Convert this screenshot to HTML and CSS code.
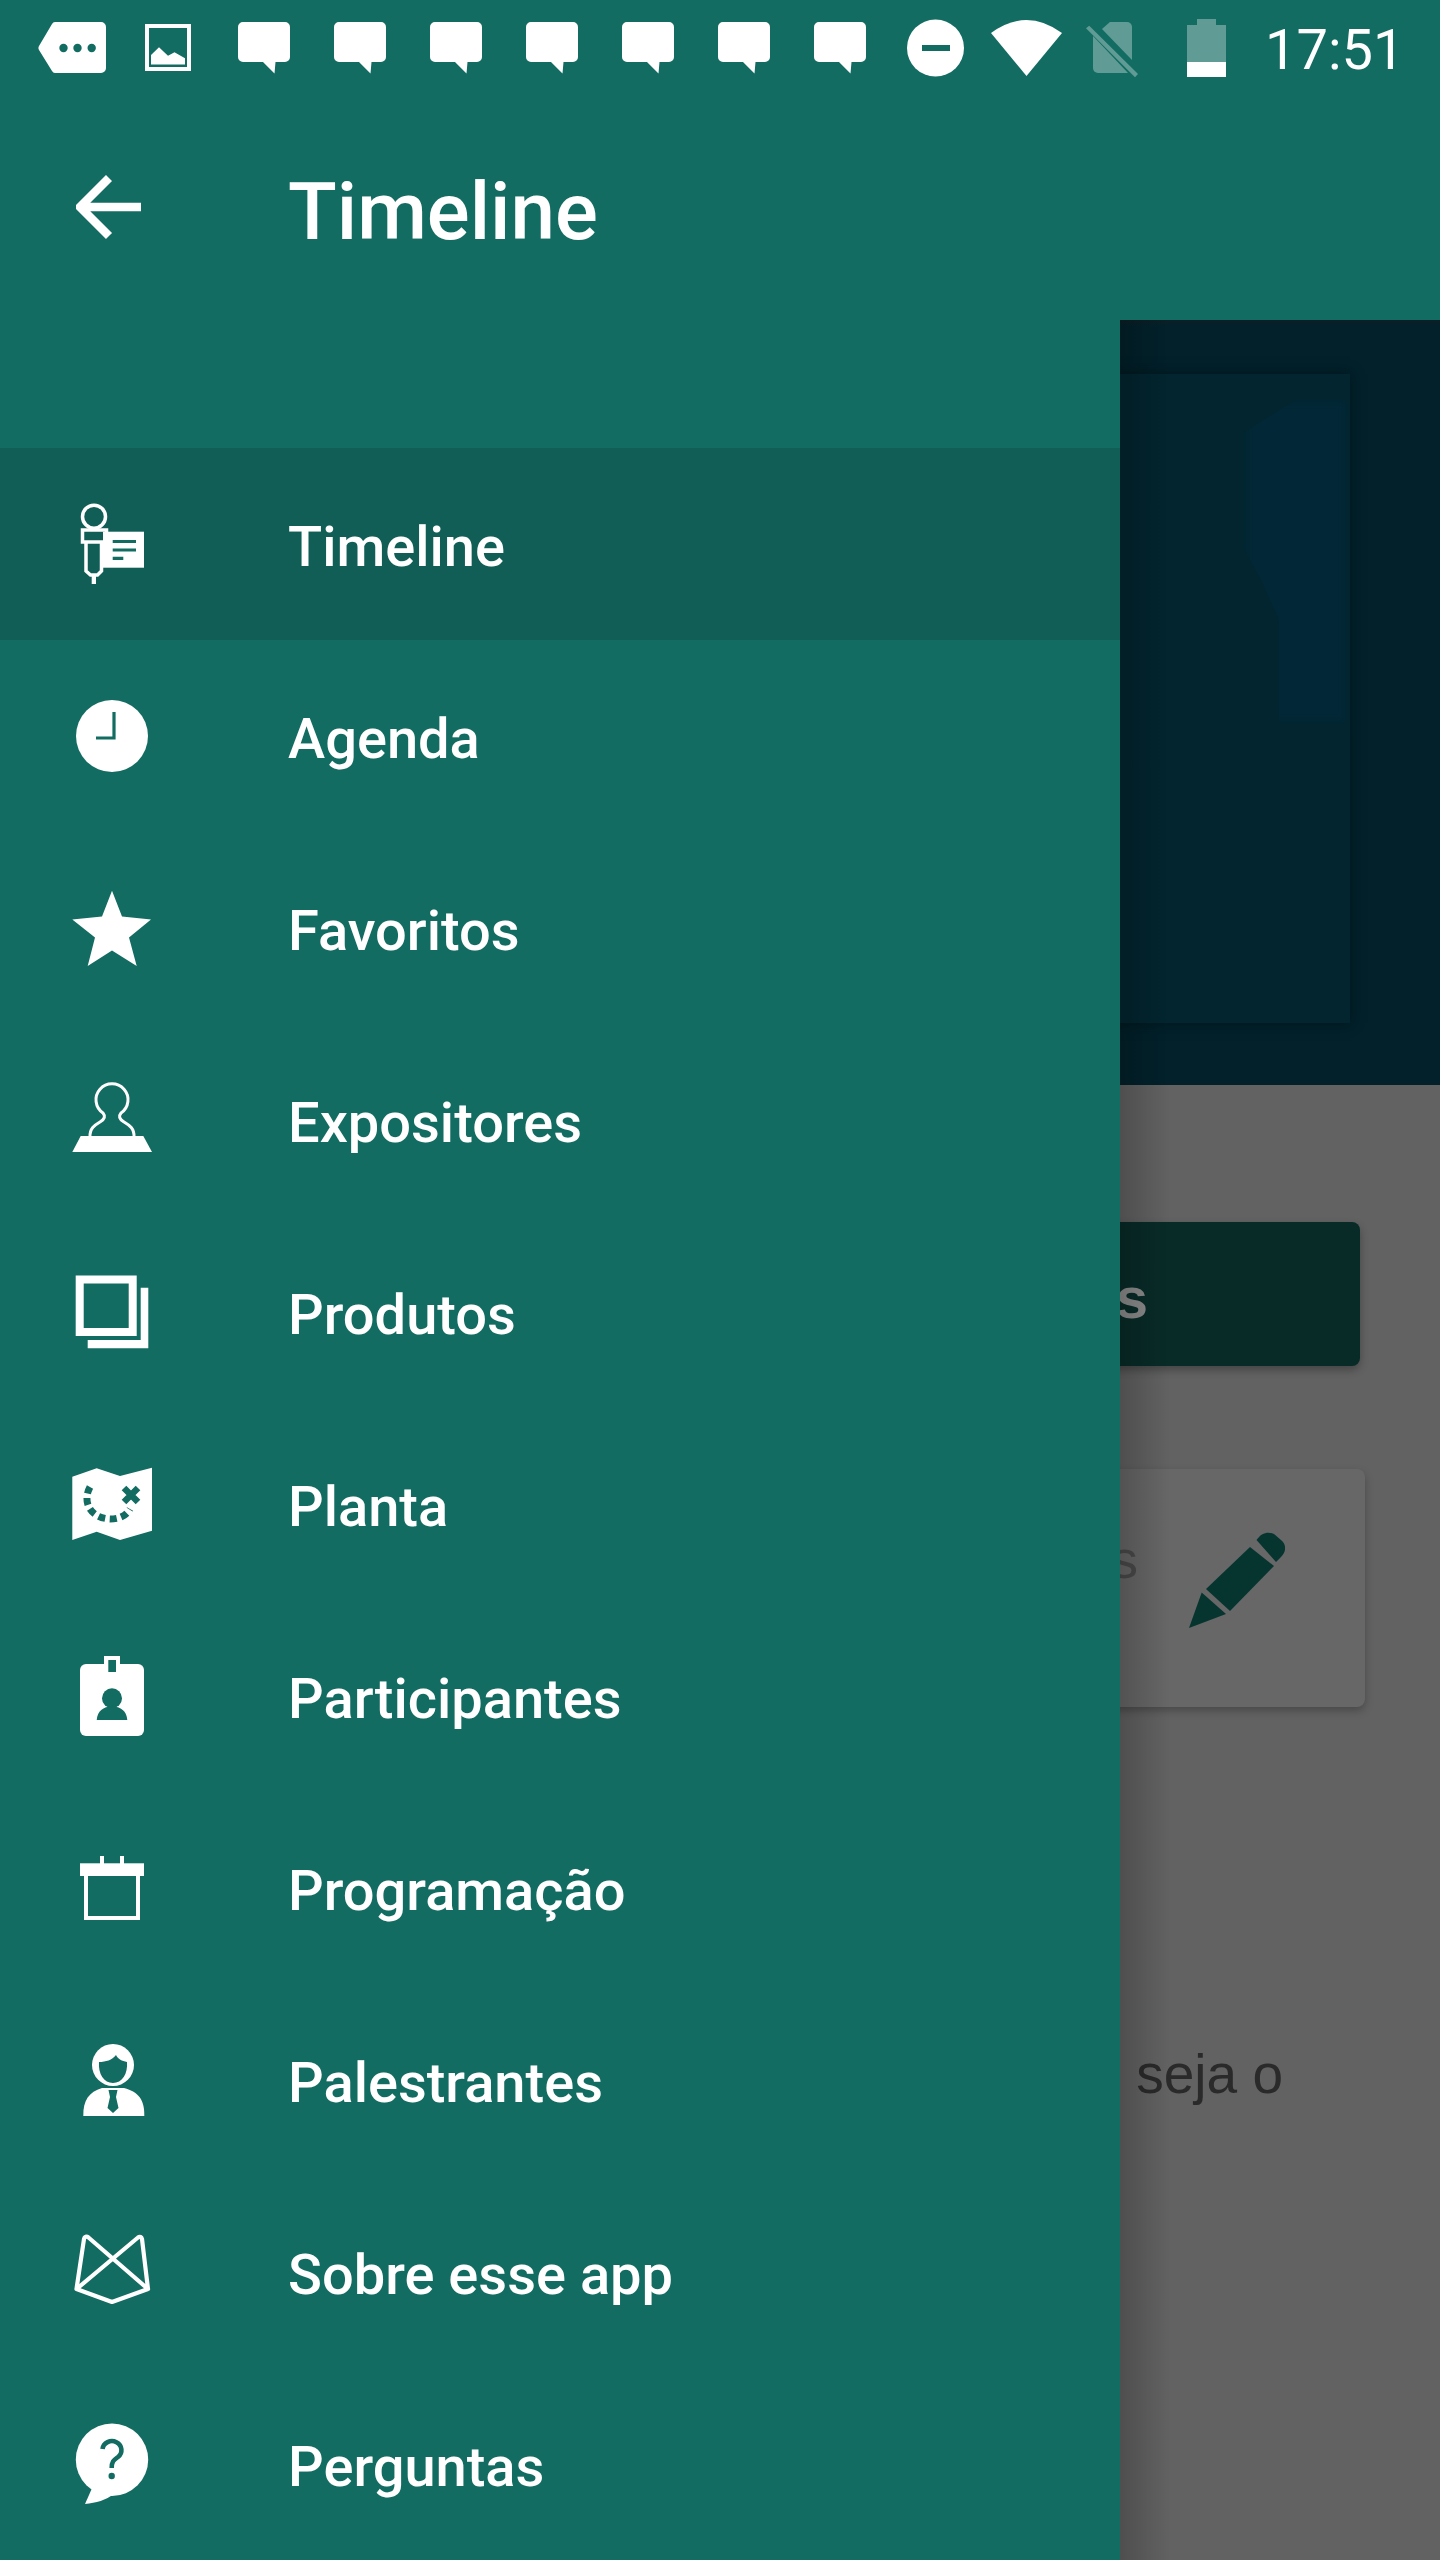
FILE: index.html
```html
<!DOCTYPE html>
<html lang="pt-BR">
<head>
<meta charset="utf-8">
<title>Timeline</title>
<link rel="stylesheet" href="styles.css">
</head>
<body>
<div class="phone">
  <header class="appbar">
    <div class="status">
      <svg class="st st-mail" viewBox="0 0 68 96"><path class="w" d="M17 22H63a5 5 0 0 1 5 5V68a5 5 0 0 1-5 5H17a4 4 0 0 1-3-2L1 50a4 4 0 0 1 0-4L14 24a4 4 0 0 1 3-2Z"/><circle class="t" cx="25.5" cy="48" r="4.2"/><circle class="t" cx="39.5" cy="48" r="4.2"/><circle class="t" cx="53.7" cy="48" r="4.2"/></svg>
      <svg class="st st-img" viewBox="0 0 46 96"><rect class="ow" x="2" y="26" width="42" height="43" stroke-width="4"/><path class="w" d="M6 55L14 47.3L23 55.7L29.500 52.300L40 58.300V64.500H6Z"/></svg>
      <svg class="st st-chat" viewBox="0 0 52 96"><path class="w" d="M5 22H47a5 5 0 0 1 5 5V57a5 5 0 0 1-5 5H37.500L36.500 73.500L25 62H5a5 5 0 0 1-5-5V27a5 5 0 0 1 5-5Z"/></svg>
      <svg class="st st-chat" viewBox="0 0 52 96"><path class="w" d="M5 22H47a5 5 0 0 1 5 5V57a5 5 0 0 1-5 5H37.500L36.500 73.500L25 62H5a5 5 0 0 1-5-5V27a5 5 0 0 1 5-5Z"/></svg>
      <svg class="st st-chat" viewBox="0 0 52 96"><path class="w" d="M5 22H47a5 5 0 0 1 5 5V57a5 5 0 0 1-5 5H37.500L36.500 73.500L25 62H5a5 5 0 0 1-5-5V27a5 5 0 0 1 5-5Z"/></svg>
      <svg class="st st-chat" viewBox="0 0 52 96"><path class="w" d="M5 22H47a5 5 0 0 1 5 5V57a5 5 0 0 1-5 5H37.500L36.500 73.500L25 62H5a5 5 0 0 1-5-5V27a5 5 0 0 1 5-5Z"/></svg>
      <svg class="st st-chat" viewBox="0 0 52 96"><path class="w" d="M5 22H47a5 5 0 0 1 5 5V57a5 5 0 0 1-5 5H37.500L36.500 73.500L25 62H5a5 5 0 0 1-5-5V27a5 5 0 0 1 5-5Z"/></svg>
      <svg class="st st-chat" viewBox="0 0 52 96"><path class="w" d="M5 22H47a5 5 0 0 1 5 5V57a5 5 0 0 1-5 5H37.500L36.500 73.500L25 62H5a5 5 0 0 1-5-5V27a5 5 0 0 1 5-5Z"/></svg>
      <svg class="st st-chat-last" viewBox="0 0 52 96"><path class="w" d="M5 22H47a5 5 0 0 1 5 5V57a5 5 0 0 1-5 5H37.500L36.500 73.500L25 62H5a5 5 0 0 1-5-5V27a5 5 0 0 1 5-5Z"/></svg>
      <svg class="st st-dnd" viewBox="0 0 57 96"><circle class="w" cx="28.500" cy="48" r="28.500"/><rect class="t" x="15" y="45" width="28" height="6"/></svg>
      <svg class="st st-wifi" viewBox="0 0 71 96"><path class="w" d="M0 33Q35.500 7 71 33L35.500 76Z"/></svg>
      <svg class="st st-sim" viewBox="0 0 53 96"><g class="dim"><path d="M16 29L24 22H41a5 5 0 0 1 5 5V60Z"/><path d="M7 36V68a5 5 0 0 0 5 5H42Z"/><path d="M0 28.300L3.200 25.700L52 74L49 77.300Z"/></g></svg>
      <svg class="st st-batt" viewBox="0 0 39 96"><path class="dim" d="M10 19H29V25H39V62H0V25H10Z"/><rect class="w" x="0" y="62" width="39" height="15"/></svg>
      <span class="clock">17:51</span>
    </div>
    <div class="toolbar">
      <svg class="back" viewBox="0 0 66 64"><path d="M65 32H6M33 3L4 32L33 61" fill="none" stroke="#fff" stroke-width="8.500"/></svg>
      <h1 class="title">Timeline</h1>
    </div>
  </header>

  <main class="page">
    <section class="banner">
      <div class="banner-panel"><div class="banner-glow"></div></div>
    </section>
    <div class="action"><span>s</span></div>
    <div class="card">
      <span class="card-text">s</span>
      <svg class="pencil" viewBox="0 0 96 96"><path d="M0 96L12.700 60.500L37 82Z"/><path d="M17 57L61 15L85 34L41 79Z"/><path d="M67.500 8C72 1 79 -1 85 2L92 8C98 13 97 20 92 25L87 30Z"/></svg>
    </div>
    <p class="body-text">seja o</p>
  </main>

  <nav class="drawer">
    <a class="item active">
      <svg class="ico" viewBox="0 0 96 96"><circle class="ow" cx="30" cy="20.700" r="11.500" stroke-width="3.500"/><rect class="ow" x="18.500" y="34" width="24" height="12" stroke-width="3.500"/><path class="ow" d="M22 46V75L26.500 79H33.500L37.500 75V46" stroke-width="3.500"/><rect class="w" x="27.700" y="78" width="4.300" height="10"/><rect class="w" x="39" y="35.700" width="41" height="36"/><path class="tl" d="M48.700 45.500H72M48.700 54H72M48.700 62.300H59.300" stroke-width="3.200"/></svg>
      <span>Timeline</span>
    </a>
    <a class="item">
      <svg class="ico" viewBox="0 0 96 96"><circle class="w" cx="48" cy="48" r="36"/><path class="tl" d="M50 24V50H32" stroke-width="3.200"/></svg>
      <span>Agenda</span>
    </a>
    <a class="item">
      <svg class="ico" viewBox="0 0 96 96"><path class="w" d="M48 10.700L58 36.500L87 39.500L65 57.500L72.700 86L48 70.500L23.700 86L31 57.500L8.300 39.500L38 36.500Z"/></svg>
      <span>Favoritos</span>
    </a>
    <a class="item">
      <svg class="ico" viewBox="0 0 96 96"><path class="ow" d="M26 65C25.500 56 31 53 36 50C41 47 41.500 44 39 41A16 16 0 1 1 57 41C54.500 44 55 47 60 50C65 53 70.500 56 70 65" stroke-width="3"/><path class="w" d="M16.700 64H79.300L88 80H8.300Z"/></svg>
      <span>Expositores</span>
    </a>
    <a class="item">
      <svg class="ico" viewBox="0 0 96 96"><rect class="ow" x="15.700" y="15.500" width="53" height="52.500" stroke-width="8"/><path class="w" d="M76.700 23.700H84.300V84.300H23.700V76H76.700Z"/></svg>
      <span>Produtos</span>
    </a>
    <a class="item">
      <svg class="ico" viewBox="0 0 96 96"><path class="w" d="M8.300 20.700L32.700 12.300L56 20L88 11.700V74.700L56 84L32.700 75.700L8.300 84Z"/><path class="tl" d="M26 31C18 46 26 62 46 63C55 63 62 60 66 53" stroke-width="7" stroke-dasharray="7 4.500"/><path class="tl" d="M60 32L74 46M74 32L60 46" stroke-width="6.500"/></svg>
      <span>Planta</span>
    </a>
    <a class="item">
      <svg class="ico" viewBox="0 0 96 96"><rect class="w" x="16" y="16" width="64" height="72" rx="6"/><rect class="w" x="40" y="8" width="16" height="10"/><rect class="t" x="44.300" y="12" width="7.700" height="12"/><circle class="t" cx="48" cy="50.300" r="10"/><path class="t" d="M32.700 72C33.500 63 39 58.500 48 58.500C57 58.500 62.500 63 63.300 72Z"/></svg>
      <span>Participantes</span>
    </a>
    <a class="item">
      <svg class="ico" viewBox="0 0 96 96"><rect class="ow" x="22" y="34" width="52" height="44" stroke-width="4"/><rect class="w" x="16" y="23.300" width="64" height="12.700"/><rect class="w" x="36" y="16" width="4" height="8"/><rect class="w" x="56" y="16" width="4" height="8"/></svg>
      <span>Programação</span>
    </a>
    <a class="item">
      <svg class="ico" viewBox="0 0 96 96"><path class="w" d="M19.300 84C19 68 25 60 38 56L60 56C75 60 80.500 68 80.300 84Z"/><circle class="w" cx="49" cy="33" r="21"/><path class="t" d="M35 30C42 30 48 28 52 23C54 27 58 29 63 30C64 42 58 51 49 51C40 51 34 42 35 30Z"/><path class="t" d="M44.500 58H53.500L52 65L54.500 76L49 81L43.500 76L46 65Z"/></svg>
      <span>Palestrantes</span>
    </a>
    <a class="item">
      <svg class="ico" viewBox="0 0 96 96"><path class="ol" d="M12.500 65L20 15C20.500 12.500 22.500 12 24.500 13.500L84 65L48 78L12.500 65L74 13.500C76 12 77.500 13 78 15L84 65" stroke-width="4.200"/></svg>
      <span>Sobre esse app</span>
    </a>
    <a class="item">
      <svg class="ico" viewBox="0 0 96 96"><circle class="w" cx="48" cy="43.700" r="36.200"/><path class="w" d="M29 70L21 88C32 87 42 84 50 78Z"/><path class="tl" d="M38.500 33A9.500 9 0 1 1 54 41C50 44 47.700 45 47.700 52" stroke-width="4.600"/><circle class="t" cx="47.700" cy="60" r="3.200"/></svg>
      <span>Perguntas</span>
    </a>
  </nav>
</div>
</body>
</html>
```

FILE: styles.css
```css
* { box-sizing: border-box; }

html, body {
  margin: 0;
  padding: 0;
}

body {
  background: #626262;
  font-family: Roboto, "Liberation Sans", sans-serif;
}

.phone {
  position: relative;
  width: 1440px;
  height: 2560px;
  overflow: hidden;
  background: #626262;
}

/* svg paint helpers */
.w { fill: #fff; }
.t { fill: #136c62; }
.ow { fill: none; stroke: #fff; }
.ol { fill: none; stroke: #fff; stroke-linejoin: round; stroke-linecap: round; }
.tl { fill: none; stroke: #136c62; }
.dim { fill: #fff; fill-opacity: .33; }

/* app bar */
.appbar {
  position: relative;
  z-index: 2;
  height: 320px;
  background: #136c62;
}

.status {
  display: flex;
  align-items: center;
  height: 96px;
  padding-left: 38px;
}

.st { flex: none; height: 96px; }
.st-mail { width: 68px; margin-right: 39px; }
.st-img { width: 46px; margin-right: 47px; }
.st-chat { width: 52px; margin-right: 44px; }
.st-chat-last { width: 52px; margin-right: 41px; }
.st-dnd { width: 57px; margin-right: 27px; }
.st-wifi { width: 71px; margin-right: 24px; }
.st-sim { width: 53px; margin-right: 48px; }
.st-batt { width: 39px; margin-right: 39px; }

.clock {
  margin-top: 4px;
  color: #fff;
  font-size: 56px;
  line-height: 96px;
}

.toolbar {
  display: flex;
  align-items: center;
  height: 224px;
  padding-left: 76px;
}

.back { flex: none; width: 66px; height: 64px; margin: -2px 146px 0 0; }

.title {
  margin: 8px 0 0;
  color: #fff;
  font-size: 80px;
  font-weight: 500;
  line-height: 94px;
}

/* page beneath the drawer */
.page {
  display: flex;
  flex-direction: column;
}

.banner {
  height: 765px;
  padding: 54px 90px 62px 0;
  background: linear-gradient(#0b1f26 0, #02212b 6px);
}

.banner-panel {
  position: relative;
  height: 100%;
  background: #02252f;
  box-shadow: 0 0 12px rgba(0, 15, 22, .7);
}

.banner-glow {
  position: absolute;
  top: 26px;
  right: 3px;
  width: 103px;
  height: 323px;
  background: #022736;
  filter: blur(4px);
  clip-path: polygon(50% 0, 100% 0, 100% 100%, 34% 100%, 34% 68%, 17% 56%, 0 46%, 0 10%);
}

.action {
  display: flex;
  align-items: center;
  justify-content: flex-end;
  height: 144px;
  margin: 137px 80px 0;
  padding: 6px 212px 0 0;
  background: #082b28;
  border-radius: 8px;
  box-shadow: 0 4px 8px rgba(0, 0, 0, .3);
  color: #8c8c8c;
  font-family: "Liberation Sans", Arial, sans-serif;
  font-size: 58px;
  font-weight: 700;
}

.card {
  display: flex;
  align-items: flex-start;
  justify-content: flex-end;
  height: 238px;
  margin: 103px 75px 0 80px;
  padding: 63px 80px 0 0;
  background: #676767;
  border-radius: 8px;
  box-shadow: 0 4px 8px rgba(0, 0, 0, .25);
}

.card-text {
  margin-right: 51px;
  color: #4a4a4a;
  font-family: "Liberation Sans", Arial, sans-serif;
  font-size: 54px;
  line-height: 54px;
}

.pencil { flex: none; width: 96px; height: 96px; fill: #063530; }

.body-text {
  margin: 335px 157px 0 0;
  color: #2a2a2a;
  font-family: "Liberation Sans", Arial, sans-serif;
  font-size: 55px;
  text-align: right;
}

/* navigation drawer */
.drawer {
  position: absolute;
  z-index: 1;
  top: 320px;
  left: 0;
  bottom: 0;
  width: 1120px;
  display: flex;
  flex-direction: column;
  padding-top: 128px;
  background: #136c62;
}

.drawer::after {
  content: "";
  position: absolute;
  top: 0;
  bottom: 0;
  left: 100%;
  width: 50px;
  background: linear-gradient(to right, rgba(0, 0, 0, .2), rgba(0, 0, 0, 0));
}

.item {
  flex: none;
  display: flex;
  align-items: center;
  height: 192px;
  padding-left: 64px;
  color: #fff;
  font-size: 56px;
  font-weight: 500;
}

.item span { margin-top: 5px; }

.item.active { background: #115e56; }

.ico { flex: none; width: 96px; height: 96px; margin-right: 128px; }
```
